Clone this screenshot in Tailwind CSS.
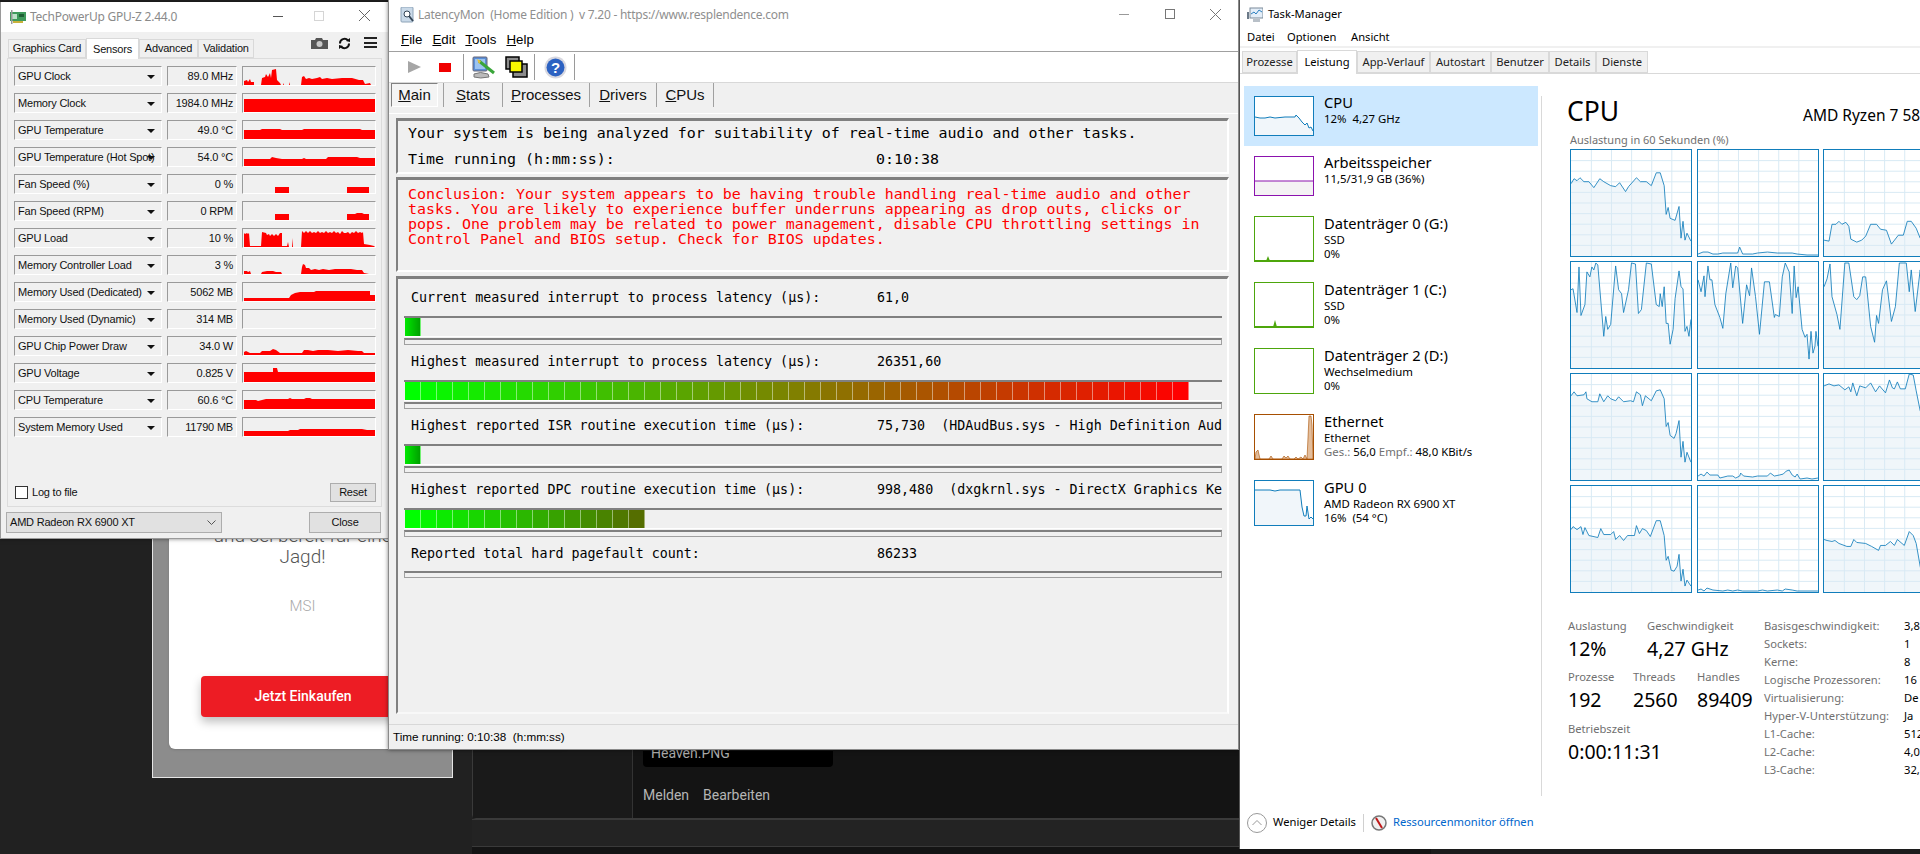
<!DOCTYPE html>
<html lang="en">
<head>
<meta charset="UTF-8">
<title>GPU-Z, LatencyMon, Task-Manager</title>
<script src="https://cdn.jsdelivr.net/npm/@tailwindcss/browser@4"></script>
</head>
<body class="bg-[#212121] h-[854px] w-[1920px] overflow-hidden relative">

<!-- forum page behind the windows -->
<div class="absolute left-[472px] top-[600px] w-[1448px] h-[219px] bg-[#141414] border border-[#3a3a3a] rounded-b flex">
  <div class="w-[160px] h-full border-r border-[#333] bg-[#1a1a1a]"></div>
  <div class="pl-[10px] pt-[150px] text-[#b5b5b5] font-['Roboto',sans-serif] text-[14px]">
    <div class="w-[190px] h-[16px] bg-black rounded-b text-[#aaa] px-2 leading-[4px]">Heaven.PNG</div>
    <div class="flex gap-[14px] mt-[18px]"><span>Melden</span><span>Bearbeiten</span></div>
  </div>
</div>
<div class="absolute left-[472px] top-[819px] w-[1448px] h-[27px] bg-[#232323] border-t border-[#3a3a3a]"></div>
<div class="absolute left-[472px] top-[846px] w-[1448px] h-[8px] bg-[#141414] border-t border-[#3a3a3a] flex"><div class="w-[959px]"></div><div class="flex-1 bg-[#1c1c1c]"></div></div>

<!-- MSI ad -->
<div class="absolute left-[152px] top-[480px] w-[301px] h-[298px] bg-[#8c8c8c] border-b border-x border-[#e5e5e5] pl-[16px] font-['Roboto',sans-serif]">
  <div class="w-[400px] h-[269px] bg-white rounded-b-md shadow flex flex-col">
    <div class="w-[267px] text-center font-light text-[#555] text-[19px] leading-[24px] pt-[44px]">und sei bereit für eine</div>
    <div class="w-[267px] text-center font-light text-[#555] text-[19px] leading-[24px] mt-[-3px]">Jagd!</div>
    <div class="w-[267px] text-center font-light text-[#a9a9a9] text-[15px] mt-[26px]">MSI</div>
    <div class="ml-[32px] mt-[58px] w-[204px] h-[41px] bg-[#ed1c24] rounded flex items-center justify-center text-white text-[14px] font-medium shadow-[0_5px_10px_rgba(0,0,0,0.25)]">Jetzt Einkaufen</div>
  </div>
</div>

<!-- GPU-Z -->
<div class="absolute left-0 top-[2px] w-[389px] h-[537px] bg-[#f0f0f0] shadow-[0_0_4px_rgba(0,0,0,0.5)] border-x border-b border-[#9a9a9a] font-['Liberation_Sans',sans-serif] text-[11px] tracking-[-0.2px] text-[#111]">
  <div class="h-[30px] bg-white flex items-center relative">
    <svg class="ml-[9px] w-[16px] h-[14px]" viewBox="0 0 16 14"><rect x="0" y="2" width="16" height="9" fill="#3f9a5b"/><rect x="2" y="4" width="5" height="5" fill="#bde0c8"/><rect x="9" y="4" width="5" height="3" fill="#1f5f35"/><rect x="1" y="0" width="1.5" height="14" fill="#9a9a9a"/><rect x="3" y="11" width="10" height="2" fill="#c9b23c"/></svg>
    <span class="ml-[4px] text-[12px] tracking-[-0.25px] text-[#8a8a8a] font-['Noto_Sans',sans-serif]">TechPowerUp GPU-Z 2.44.0</span>
    <svg class="absolute left-[272px] top-[14px] w-[10px] h-[2px]" viewBox="0 0 10 2"><rect width="10" height="1" fill="#555"/></svg>
    <div class="absolute left-[313px] top-[9px] w-[10px] h-[10px] border border-[#d5d5d5]"></div>
    <svg class="absolute left-[358px] top-[8px] w-[11px] h-[11px]" viewBox="0 0 11 11"><path d="M0 0L11 11M11 0L0 11" stroke="#666" stroke-width="1"/></svg>
  </div>
  <!-- tabs -->
  <div class="h-[26px] flex items-end pl-[7px] relative whitespace-nowrap">
    <div class="h-[19px] w-[78px] border border-[#d9d9d9] flex items-center justify-center">Graphics Card</div>
    <div class="h-[21px] w-[53px] bg-white border-x border-t border-[#d9d9d9] flex items-center justify-center z-10 -mb-px">Sensors</div>
    <div class="h-[19px] w-[59px] border border-[#d9d9d9] flex items-center justify-center">Advanced</div>
    <div class="h-[19px] w-[56px] border border-[#d9d9d9] flex items-center justify-center">Validation</div>
    <svg class="absolute left-[310px] top-[6px] w-[17px] h-[11px]" viewBox="0 0 17 11"><path d="M0 2H4L5 0H11L12 2H17V11H0Z" fill="#555"/><circle cx="8.5" cy="6" r="3" fill="#c8c8c8"/></svg>
    <svg class="absolute left-[337px] top-[5px] w-[13px] h-[13px]" viewBox="0 0 13 13"><path d="M2 6.5A4.5 4.5 0 0 1 10 3.5M11 6.5A4.5 4.5 0 0 1 3 9.5" fill="none" stroke="#111" stroke-width="2"/><path d="M8 4L12 5V1ZM5 9L1 8V12Z" fill="#111"/></svg>
    <div class="absolute left-[363px] top-[5px] w-[13px] h-[11px] flex flex-col justify-between"><div class="h-[2px] bg-[#222]"></div><div class="h-[2px] bg-[#222]"></div><div class="h-[2px] bg-[#222]"></div></div>
  </div>
  <!-- sensors panel -->
  <div class="mx-[6px] h-[449px] bg-[#f0f0f0] border border-[#dcdcdc] pl-[6px] pt-[7px] relative">
    <div class="flex flex-col gap-[7px]">
      <div class="flex gap-[5px] h-[20px]">
        <div class="w-[148px] border border-t-[#9a9a9a] border-l-[#9a9a9a] border-r-white border-b-white flex items-center pl-[3px] relative whitespace-nowrap overflow-hidden">GPU Clock<span class="absolute right-[6px] top-[8px] border-x-[4px] border-t-[4px] border-x-transparent border-t-[#111]"></span></div>
        <div class="w-[70px] border border-t-[#9a9a9a] border-l-[#9a9a9a] border-r-white border-b-white flex items-center justify-end pr-[3px]">89.0 MHz</div>
        <svg class="w-[134px] border border-t-[#9a9a9a] border-l-[#9a9a9a] border-r-white border-b-white" viewBox="0 0 132 18"><polygon fill="#ff0000" points="1,18 1,14 4,13 5,15 7,12 8,15 11,15 11,18 18,18 19,11 22,10 23,7 25,10 27,6 28,11 29,3 33,2 34,13 37,16 38,18 40,18 40,16 41,18 46,18 46,15 47,18 58,18 59,10 61,9 63,12 66,11 69,12 74,11 77,10 79,12 84,11 89,12 99,11 109,11 116,13 120,13 122,17 127,16 128,18"/></svg>
      </div>
      <div class="flex gap-[5px] h-[20px]">
        <div class="w-[148px] border border-t-[#9a9a9a] border-l-[#9a9a9a] border-r-white border-b-white flex items-center pl-[3px] relative whitespace-nowrap overflow-hidden">Memory Clock<span class="absolute right-[6px] top-[8px] border-x-[4px] border-t-[4px] border-x-transparent border-t-[#111]"></span></div>
        <div class="w-[70px] border border-t-[#9a9a9a] border-l-[#9a9a9a] border-r-white border-b-white flex items-center justify-end pr-[3px]">1984.0 MHz</div>
        <svg class="w-[134px] border border-t-[#9a9a9a] border-l-[#9a9a9a] border-r-white border-b-white" viewBox="0 0 132 18"><polygon fill="#ff0000" points="1,18 1,5 132,5 132,18"/></svg>
      </div>
      <div class="flex gap-[5px] h-[20px]">
        <div class="w-[148px] border border-t-[#9a9a9a] border-l-[#9a9a9a] border-r-white border-b-white flex items-center pl-[3px] relative whitespace-nowrap overflow-hidden">GPU Temperature<span class="absolute right-[6px] top-[8px] border-x-[4px] border-t-[4px] border-x-transparent border-t-[#111]"></span></div>
        <div class="w-[70px] border border-t-[#9a9a9a] border-l-[#9a9a9a] border-r-white border-b-white flex items-center justify-end pr-[3px]">49.0 °C</div>
        <svg class="w-[134px] border border-t-[#9a9a9a] border-l-[#9a9a9a] border-r-white border-b-white" viewBox="0 0 132 18"><polygon fill="#ff0000" points="1,18 1,9 17,9 19,8 37,8 39,9 59,9 61,8 117,8 119,9 132,9 132,18"/></svg>
      </div>
      <div class="flex gap-[5px] h-[20px]">
        <div class="w-[148px] border border-t-[#9a9a9a] border-l-[#9a9a9a] border-r-white border-b-white flex items-center pl-[3px] relative whitespace-nowrap overflow-hidden">GPU Temperature (Hot Spot)<span class="absolute right-[6px] top-[8px] border-x-[4px] border-t-[4px] border-x-transparent border-t-[#111]"></span></div>
        <div class="w-[70px] border border-t-[#9a9a9a] border-l-[#9a9a9a] border-r-white border-b-white flex items-center justify-end pr-[3px]">54.0 °C</div>
        <svg class="w-[134px] border border-t-[#9a9a9a] border-l-[#9a9a9a] border-r-white border-b-white" viewBox="0 0 132 18"><polygon fill="#ff0000" points="1,18 1,11 27,11 29,9 33,10 39,11 59,11 61,10 63,11 83,11 85,9 114,9 117,10 132,10 132,18"/></svg>
      </div>
      <div class="flex gap-[5px] h-[20px]">
        <div class="w-[148px] border border-t-[#9a9a9a] border-l-[#9a9a9a] border-r-white border-b-white flex items-center pl-[3px] relative whitespace-nowrap overflow-hidden">Fan Speed (%)<span class="absolute right-[6px] top-[8px] border-x-[4px] border-t-[4px] border-x-transparent border-t-[#111]"></span></div>
        <div class="w-[70px] border border-t-[#9a9a9a] border-l-[#9a9a9a] border-r-white border-b-white flex items-center justify-end pr-[3px]">0 %</div>
        <svg class="w-[134px] border border-t-[#9a9a9a] border-l-[#9a9a9a] border-r-white border-b-white" viewBox="0 0 132 18"><polygon fill="#ff0000" points="32,18 32,12 46,12 46,18"/><polygon fill="#ff0000" points="104,18 104,12 126,12 126,18"/></svg>
      </div>
      <div class="flex gap-[5px] h-[20px]">
        <div class="w-[148px] border border-t-[#9a9a9a] border-l-[#9a9a9a] border-r-white border-b-white flex items-center pl-[3px] relative whitespace-nowrap overflow-hidden">Fan Speed (RPM)<span class="absolute right-[6px] top-[8px] border-x-[4px] border-t-[4px] border-x-transparent border-t-[#111]"></span></div>
        <div class="w-[70px] border border-t-[#9a9a9a] border-l-[#9a9a9a] border-r-white border-b-white flex items-center justify-end pr-[3px]">0 RPM</div>
        <svg class="w-[134px] border border-t-[#9a9a9a] border-l-[#9a9a9a] border-r-white border-b-white" viewBox="0 0 132 18"><polygon fill="#ff0000" points="32,18 32,12 46,12 46,18"/><polygon fill="#ff0000" points="104,18 104,12 112,12 114,11 119,11 121,12 126,12 126,18"/></svg>
      </div>
      <div class="flex gap-[5px] h-[20px]">
        <div class="w-[148px] border border-t-[#9a9a9a] border-l-[#9a9a9a] border-r-white border-b-white flex items-center pl-[3px] relative whitespace-nowrap overflow-hidden">GPU Load<span class="absolute right-[6px] top-[8px] border-x-[4px] border-t-[4px] border-x-transparent border-t-[#111]"></span></div>
        <div class="w-[70px] border border-t-[#9a9a9a] border-l-[#9a9a9a] border-r-white border-b-white flex items-center justify-end pr-[3px]">10 %</div>
        <svg class="w-[134px] border border-t-[#9a9a9a] border-l-[#9a9a9a] border-r-white border-b-white" viewBox="0 0 132 18"><polygon fill="#ff0000" points="1,18 1,4 2,5 4,4 5,5 6,4 7,17 18,17 19,3 23,4 24,6 26,5 27,7 29,5 31,7 33,5 35,7 37,4 39,4 39,17 44,17 45,13 46,18 49,18 49,9 50,18 58,18 59,2 61,4 63,2 65,4 67,2 69,4 71,3 73,4 75,2 77,4 79,3 81,4 83,2 85,4 87,3 89,4 91,2 93,4 95,3 97,5 99,2 101,4 103,4 105,3 107,5 109,3 111,4 113,2 115,4 117,3 119,4 120,3 121,15 127,16 131,17 132,18"/></svg>
      </div>
      <div class="flex gap-[5px] h-[20px]">
        <div class="w-[148px] border border-t-[#9a9a9a] border-l-[#9a9a9a] border-r-white border-b-white flex items-center pl-[3px] relative whitespace-nowrap overflow-hidden">Memory Controller Load<span class="absolute right-[6px] top-[8px] border-x-[4px] border-t-[4px] border-x-transparent border-t-[#111]"></span></div>
        <div class="w-[70px] border border-t-[#9a9a9a] border-l-[#9a9a9a] border-r-white border-b-white flex items-center justify-end pr-[3px]">3 %</div>
        <svg class="w-[134px] border border-t-[#9a9a9a] border-l-[#9a9a9a] border-r-white border-b-white" viewBox="0 0 132 18"><polygon fill="#ff0000" points="1,18 1,15 4,15 5,16 7,15 8,18 18,18 19,16 24,15 30,15 33,16 38,16 39,18 58,18 59,11 60,8 62,9 63,12 66,12 68,14 72,13 76,14 80,13 86,14 92,13 100,13 108,13 114,14 119,14 121,17 126,18"/></svg>
      </div>
      <div class="flex gap-[5px] h-[20px]">
        <div class="w-[148px] border border-t-[#9a9a9a] border-l-[#9a9a9a] border-r-white border-b-white flex items-center pl-[3px] relative whitespace-nowrap overflow-hidden">Memory Used (Dedicated)<span class="absolute right-[6px] top-[8px] border-x-[4px] border-t-[4px] border-x-transparent border-t-[#111]"></span></div>
        <div class="w-[70px] border border-t-[#9a9a9a] border-l-[#9a9a9a] border-r-white border-b-white flex items-center justify-end pr-[3px]">5062 MB</div>
        <svg class="w-[134px] border border-t-[#9a9a9a] border-l-[#9a9a9a] border-r-white border-b-white" viewBox="0 0 132 18"><polygon fill="#ff0000" points="1,18 1,15 46,15 48,12 52,10 57,9 71,9 73,8 127,8 127,12 132,12 132,18"/></svg>
      </div>
      <div class="flex gap-[5px] h-[20px]">
        <div class="w-[148px] border border-t-[#9a9a9a] border-l-[#9a9a9a] border-r-white border-b-white flex items-center pl-[3px] relative whitespace-nowrap overflow-hidden">Memory Used (Dynamic)<span class="absolute right-[6px] top-[8px] border-x-[4px] border-t-[4px] border-x-transparent border-t-[#111]"></span></div>
        <div class="w-[70px] border border-t-[#9a9a9a] border-l-[#9a9a9a] border-r-white border-b-white flex items-center justify-end pr-[3px]">314 MB</div>
        <svg class="w-[134px] border border-t-[#9a9a9a] border-l-[#9a9a9a] border-r-white border-b-white" viewBox="0 0 132 18"></svg>
      </div>
      <div class="flex gap-[5px] h-[20px]">
        <div class="w-[148px] border border-t-[#9a9a9a] border-l-[#9a9a9a] border-r-white border-b-white flex items-center pl-[3px] relative whitespace-nowrap overflow-hidden">GPU Chip Power Draw<span class="absolute right-[6px] top-[8px] border-x-[4px] border-t-[4px] border-x-transparent border-t-[#111]"></span></div>
        <div class="w-[70px] border border-t-[#9a9a9a] border-l-[#9a9a9a] border-r-white border-b-white flex items-center justify-end pr-[3px]">34.0 W</div>
        <svg class="w-[134px] border border-t-[#9a9a9a] border-l-[#9a9a9a] border-r-white border-b-white" viewBox="0 0 132 18"><polygon fill="#ff0000" points="1,18 1,15 3,14 7,16 17,16 19,14 27,14 30,12 33,13 37,16 59,16 61,13 65,13 70,14 75,13 85,13 95,14 105,13 115,14 119,14 121,16 132,16 132,18"/></svg>
      </div>
      <div class="flex gap-[5px] h-[20px]">
        <div class="w-[148px] border border-t-[#9a9a9a] border-l-[#9a9a9a] border-r-white border-b-white flex items-center pl-[3px] relative whitespace-nowrap overflow-hidden">GPU Voltage<span class="absolute right-[6px] top-[8px] border-x-[4px] border-t-[4px] border-x-transparent border-t-[#111]"></span></div>
        <div class="w-[70px] border border-t-[#9a9a9a] border-l-[#9a9a9a] border-r-white border-b-white flex items-center justify-end pr-[3px]">0.825 V</div>
        <svg class="w-[134px] border border-t-[#9a9a9a] border-l-[#9a9a9a] border-r-white border-b-white" viewBox="0 0 132 18"><polygon fill="#ff0000" points="1,18 1,8 30,8 30,4 34,4 35,8 132,8 132,18"/></svg>
      </div>
      <div class="flex gap-[5px] h-[20px]">
        <div class="w-[148px] border border-t-[#9a9a9a] border-l-[#9a9a9a] border-r-white border-b-white flex items-center pl-[3px] relative whitespace-nowrap overflow-hidden">CPU Temperature<span class="absolute right-[6px] top-[8px] border-x-[4px] border-t-[4px] border-x-transparent border-t-[#111]"></span></div>
        <div class="w-[70px] border border-t-[#9a9a9a] border-l-[#9a9a9a] border-r-white border-b-white flex items-center justify-end pr-[3px]">60.6 °C</div>
        <svg class="w-[134px] border border-t-[#9a9a9a] border-l-[#9a9a9a] border-r-white border-b-white" viewBox="0 0 132 18"><polygon fill="#ff0000" points="1,18 1,9 13,9 15,10 19,9 23,8 45,8 47,7 49,8 61,8 63,7 67,7 69,8 132,8 132,18"/></svg>
      </div>
      <div class="flex gap-[5px] h-[20px]">
        <div class="w-[148px] border border-t-[#9a9a9a] border-l-[#9a9a9a] border-r-white border-b-white flex items-center pl-[3px] relative whitespace-nowrap overflow-hidden">System Memory Used<span class="absolute right-[6px] top-[8px] border-x-[4px] border-t-[4px] border-x-transparent border-t-[#111]"></span></div>
        <div class="w-[70px] border border-t-[#9a9a9a] border-l-[#9a9a9a] border-r-white border-b-white flex items-center justify-end pr-[3px]">11790 MB</div>
        <svg class="w-[134px] border border-t-[#9a9a9a] border-l-[#9a9a9a] border-r-white border-b-white" viewBox="0 0 132 18"><polygon fill="#ff0000" points="1,18 1,13 45,13 47,12 55,12 57,11 119,11 124,12 132,12 132,18"/></svg>
      </div>
    </div>
    <div class="flex items-center justify-between mt-[46px] pr-[5px]">
      <label class="flex items-center gap-[4px] ml-[1px]"><span class="w-[13px] h-[13px] bg-white border border-[#333]"></span>Log to file</label>
      <div class="w-[46px] h-[19px] bg-[#e1e1e1] border border-[#adadad] flex items-center justify-center">Reset</div>
    </div>
  </div>
  <div class="flex justify-between pl-[5px] pr-[7px] mt-[5px]">
    <div class="w-[216px] h-[21px] bg-[#e1e1e1] border border-[#adadad] flex items-center justify-between pl-[3px] pr-[5px]">AMD Radeon RX 6900 XT<svg class="w-[9px] h-[6px]" viewBox="0 0 9 6"><path d="M0.5 0.5L4.5 4.5L8.5 0.5" fill="none" stroke="#555"/></svg></div>
    <div class="w-[72px] h-[21px] bg-[#e1e1e1] border border-[#adadad] flex items-center justify-center">Close</div>
  </div>
</div>

<!-- LatencyMon -->
<div class="absolute left-[388px] top-0 w-[851px] h-[750px] bg-[#f0f0f0] border-x border-b border-[#8a8a8a] shadow-[0_0_4px_rgba(0,0,0,0.5)] flex flex-col font-['Liberation_Sans',sans-serif]">
  <div class="h-[29px] bg-white flex items-center relative shrink-0">
    <svg class="ml-[11px] w-[15px] h-[16px]" viewBox="0 0 15 16"><rect x="1" y="0" width="12" height="15" rx="1" fill="#c9d9e8" stroke="#8da3b8"/><circle cx="7" cy="7" r="3" fill="#fff" stroke="#345"/><path d="M9 9L13 14" stroke="#345" stroke-width="2"/></svg>
    <span class="ml-[3px] text-[12px] tracking-[-0.25px] text-[#8f8f8f] font-['Noto_Sans',sans-serif] whitespace-pre">LatencyMon  (Home Edition )  v 7.20 - https://www.resplendence.com</span>
    <div class="absolute left-[730px] top-[14px] w-[10px] h-px bg-[#999]"></div>
    <div class="absolute left-[776px] top-[9px] w-[10px] h-[10px] border border-[#777]"></div>
    <svg class="absolute left-[821px] top-[9px] w-[11px] h-[11px]" viewBox="0 0 11 11"><path d="M0 0L11 11M11 0L0 11" stroke="#777" stroke-width="1"/></svg>
  </div>
  <div class="h-[23px] bg-white border-b border-[#a0a0a0] flex items-center gap-[10px] pl-[12px] text-[13.3px] text-black shrink-0">
    <span><u>F</u>ile</span><span><u>E</u>dit</span><span><u>T</u>ools</span><span><u>H</u>elp</span>
  </div>
  <div class="h-[31px] bg-white border-b border-[#d8d8d8] flex items-center shrink-0">
    <svg class="ml-[19px] w-[13px] h-[12px]" viewBox="0 0 13 12"><polygon points="0,0 13,6 0,12" fill="#a6a6a6"/></svg>
    <div class="ml-[18px] w-[12px] h-[9px] bg-[#f00000]"></div>
    <div class="ml-[12px] w-px h-[26px] bg-[#9a9a9a]"></div>
    <svg class="ml-[8px] w-[24px] h-[23px]" viewBox="0 0 24 23"><rect x="1" y="1" width="14" height="14" rx="1" fill="#5a8fd8" stroke="#667"/><rect x="3" y="3" width="10" height="10" fill="#9cc3f0"/><path d="M2 18Q8 15 16 18L17 21Q8 23 2 21Z" fill="#bbb" stroke="#777"/><path d="M7 5L22 17" stroke="#3aa63a" stroke-width="3"/><path d="M5 3L9 5L7 8Z" fill="#e8c13a"/></svg>
    <svg class="ml-[9px] w-[23px] h-[22px]" viewBox="0 0 23 22"><rect x="8" y="8" width="14" height="13" fill="#8c8c8c" stroke="#000" stroke-width="1.5"/><rect x="1" y="1" width="13" height="12" fill="#8c8c8c" stroke="#000" stroke-width="1.5"/><rect x="5" y="5" width="12" height="11" fill="#f7f700" stroke="#000" stroke-width="1.5"/></svg>
    <div class="ml-[6px] w-px h-[26px] bg-[#9a9a9a]"></div>
    <svg class="ml-[9px] w-[23px] h-[23px]" viewBox="0 0 23 23"><circle cx="11.5" cy="11.5" r="11" fill="#d8d8e0"/><circle cx="11.5" cy="11.5" r="9" fill="#2c62c2"/><text x="11.5" y="17" text-anchor="middle" font-family="Liberation Sans" font-weight="700" font-size="15" fill="#fff">?</text></svg>
    <div class="ml-[7px] w-px h-[26px] bg-[#9a9a9a]"></div>
  </div>
  <div class="h-[30px] flex items-start pl-[2px] text-[15px] text-[#111] shrink-0">
    <div class="w-[47px] h-[24px] bg-[#f4f4f4] border border-t-[#808080] border-l-[#808080] border-r-white border-b-white flex items-center justify-center"><span><u>M</u>ain</span></div>
    <div class="ml-[5px] w-[59px] h-[24px] border-l border-[#a0a0a0] flex items-center justify-center"><span><u>S</u>tats</span></div>
    <div class="w-[87px] h-[24px] border-l border-[#a0a0a0] flex items-center justify-center"><span><u>P</u>rocesses</span></div>
    <div class="w-[67px] h-[24px] border-l border-[#a0a0a0] flex items-center justify-center"><span><u>D</u>rivers</span></div>
    <div class="w-[58px] h-[24px] border-x border-[#a0a0a0] flex items-center justify-center"><span><u>C</u>PUs</span></div>
  </div>
  <!-- panels -->
  <div class="flex-1 border-t border-white pt-[4px] pl-[7px] pr-[9px] flex flex-col gap-[3px] font-['DejaVu_Sans_Mono',monospace]">
    <div class="h-[56px] border-[2px] border-t-[3px] border-t-[#808080] border-l-[#808080] border-r-white border-b-white text-[14.95px] text-black pl-[10px] leading-[26px]">
      <div class="whitespace-pre -mt-px">Your system is being analyzed for suitability of real-time audio and other tasks.</div>
      <div class="flex"><span class="w-[468px]">Time running (h:mm:ss):</span><span>0:10:38</span></div>
    </div>
    <div class="h-[95px] border-[2px] border-t-[3px] border-t-[#808080] border-l-[#808080] border-r-white border-b-white text-[14.95px] text-[#ff0000] pl-[10px] pt-[7px] leading-[15px]">
      <div>Conclusion: Your system appears to be having trouble handling real-time audio and other</div>
      <div>tasks. You are likely to experience buffer underruns appearing as drop outs, clicks or</div>
      <div>pops. One problem may be related to power management, disable CPU throttling settings in</div>
      <div>Control Panel and BIOS setup. Check for BIOS updates.</div>
    </div>
    <div class="flex-1 border-[2px] border-t-[3px] border-t-[#808080] border-l-[#808080] border-r-white border-b-[#f8f8f8] mt-[1px] pl-[6px] pr-[5px] text-[13.33px] text-black mb-[10px]">
      <div class="h-[37px] pl-[7px] pt-[9px] flex whitespace-nowrap overflow-hidden"><span class="w-[466px] shrink-0">Current measured interrupt to process latency (µs):</span><span>61,0</span></div>
      <div class="h-[21px] border-t-[2px] border-t-[#808080] border-b-[1px] border-b-white flex pl-[1px]" data-cells="1" data-scale="2"></div>
      <div class="h-[7px] mt-[1px] border border-t-[2px] border-[#a0a0a0] border-t-[#808080]"></div>
      <div class="h-[35px] pl-[7px] pt-[7px] flex whitespace-nowrap overflow-hidden"><span class="w-[466px] shrink-0">Highest measured interrupt to process latency (µs):</span><span>26351,60</span></div>
      <div class="h-[21px] border-t-[2px] border-t-[#808080] border-b-[1px] border-b-white flex pl-[1px]" data-cells="49" data-scale="1"></div>
      <div class="h-[7px] mt-[1px] border border-t-[2px] border-[#a0a0a0] border-t-[#808080]"></div>
      <div class="h-[35px] pl-[7px] pt-[7px] flex whitespace-nowrap overflow-hidden"><span class="w-[466px] shrink-0">Highest reported ISR routine execution time (µs):</span><span class="whitespace-pre">75,730  (HDAudBus.sys - High Definition Aud</span></div>
      <div class="h-[21px] border-t-[2px] border-t-[#808080] border-b-[1px] border-b-white flex pl-[1px]" data-cells="1" data-scale="2"></div>
      <div class="h-[7px] mt-[1px] border border-t-[2px] border-[#a0a0a0] border-t-[#808080]"></div>
      <div class="h-[35px] pl-[7px] pt-[7px] flex whitespace-nowrap overflow-hidden"><span class="w-[466px] shrink-0">Highest reported DPC routine execution time (µs):</span><span class="whitespace-pre">998,480  (dxgkrnl.sys - DirectX Graphics Ker</span></div>
      <div class="h-[21px] border-t-[2px] border-t-[#808080] border-b-[1px] border-b-white flex pl-[1px]" data-cells="15" data-scale="3"></div>
      <div class="h-[7px] mt-[1px] border border-t-[2px] border-[#a0a0a0] border-t-[#808080]"></div>
      <div class="h-[34px] pl-[7px] pt-[7px] flex whitespace-nowrap overflow-hidden"><span class="w-[466px] shrink-0">Reported total hard pagefault count:</span><span>86233</span></div>
      <div class="h-[7px] border border-t-[2px] border-[#a0a0a0] border-t-[#808080]"></div>
    </div>
  </div>
  <div class="h-[25px] border-t border-[#d8d8d8] flex items-center pl-[4px] text-[11.7px] text-black shrink-0 whitespace-pre">Time running: 0:10:38  (h:mm:ss)</div>
</div>

<!-- Task-Manager -->
<div class="absolute left-[1239px] top-0 w-[681px] h-[849px] bg-white border-l border-[#555] font-['Noto_Sans',sans-serif] text-black overflow-hidden">
  <div class="h-[29px] flex items-center pl-[7px] text-[11.2px]">
    <svg class="w-[16px] h-[16px]" viewBox="0 0 16 16"><rect x="3" y="1" width="13" height="10" fill="#e4eef8" stroke="#7a8a99"/><path d="M4 7L7 5L9 7L12 3L15 5" fill="none" stroke="#2a7fc0"/><rect x="0" y="5" width="2" height="7" fill="#6c7a88"/><path d="M6 12H13V15H6Z" fill="#b8c0c8"/></svg>
    <span class="ml-[5px]">Task-Manager</span>
  </div>
  <div class="h-[19px] flex items-center pl-[7px] text-[11.2px] border-b-[2px] border-[#f0f0f0]">
    <span class="w-[40px]">Datei</span><span class="w-[64px]">Optionen</span><span>Ansicht</span>
  </div>
  <div class="h-[26px] flex items-end pl-[2px] text-[11.2px] border-b border-[#d9d9d9]">
    <div class="w-[55px] h-[22px] bg-[#f0f0f0] border border-[#d9d9d9] flex items-center justify-center text-[#222]">Prozesse</div>
    <div class="w-[60px] h-[24px] bg-white border-x border-t border-[#d9d9d9] flex items-center justify-center -mb-px z-10">Leistung</div>
    <div class="w-[73px] h-[22px] bg-[#f0f0f0] border border-[#d9d9d9] flex items-center justify-center text-[#222]">App-Verlauf</div>
    <div class="w-[61px] h-[22px] bg-[#f0f0f0] border border-[#d9d9d9] flex items-center justify-center text-[#222]">Autostart</div>
    <div class="w-[58px] h-[22px] bg-[#f0f0f0] border border-[#d9d9d9] flex items-center justify-center text-[#222]">Benutzer</div>
    <div class="w-[47px] h-[22px] bg-[#f0f0f0] border border-[#d9d9d9] flex items-center justify-center text-[#222]">Details</div>
    <div class="w-[52px] h-[22px] bg-[#f0f0f0] border border-[#d9d9d9] flex items-center justify-center text-[#222]">Dienste</div>
  </div>
  <div class="flex h-[724px]">
    <!-- left list -->
    <div class="w-[301px] shrink-0 pt-[12px] pl-[4px] pr-[3px] flex flex-col">
      <div class="h-[60px] bg-[#cce8ff] flex items-start pt-[10px] pl-[10px]">
        <svg class="w-[60px] h-[40px] border border-[#117dbb] bg-white" viewBox="0 0 58 38"><polygon fill="#f1f6fa" points="0,20 5,21 10,21 15,20 20,21 30,20 40,20 41,18 44,21 47,25 50,28 52,26 54,31 56,30 58,34 58,38 0,38"/><polyline fill="none" stroke="#117dbb" points="0,20 5,21 10,21 15,20 20,21 30,20 40,20 41,18 44,21 47,25 50,28 52,26 54,31 56,30 58,34"/></svg>
        <div class="ml-[10px] -mt-[3px]"><div class="text-[14.7px] leading-[18px]">CPU</div><div class="text-[11.4px] leading-[15px] whitespace-pre">12%  4,27 GHz</div></div>
      </div>
      <div class="h-[60px] flex items-start pt-[10px] pl-[10px]">
        <svg class="w-[60px] h-[40px] border border-[#8b12ae] bg-white" viewBox="0 0 58 38"><rect x="0" y="24" width="58" height="14" fill="#f4f2f4"/><line x1="0" y1="24" x2="58" y2="24" stroke="#8b12ae"/></svg>
        <div class="ml-[10px] -mt-[3px]"><div class="text-[14.7px] leading-[18px]">Arbeitsspeicher</div><div class="text-[11.4px] leading-[15px]">11,5/31,9 GB (36%)</div></div>
      </div>
      <div class="h-[66px] flex items-start pt-[10px] pl-[10px]">
        <svg class="w-[60px] h-[46px] border border-[#4da60c] bg-white" viewBox="0 0 58 44"><polygon fill="#4da60c" points="11,44 13,39 15,44"/><rect y="43" x="0" width="58" height="1" fill="#4da60c"/></svg>
        <div class="ml-[10px] -mt-[2px]"><div class="text-[14.7px] leading-[18px]">Datenträger 0 (G:)</div><div class="text-[11.4px] leading-[15px]">SSD</div><div class="text-[11.4px] leading-[14px]">0%</div></div>
      </div>
      <div class="h-[66px] flex items-start pt-[10px] pl-[10px]">
        <svg class="w-[60px] h-[46px] border border-[#4da60c] bg-white" viewBox="0 0 58 44"><polygon fill="#4da60c" points="18,44 20,37 22,44"/><rect y="43" x="0" width="58" height="1" fill="#4da60c"/></svg>
        <div class="ml-[10px] -mt-[2px]"><div class="text-[14.7px] leading-[18px]">Datenträger 1 (C:)</div><div class="text-[11.4px] leading-[15px]">SSD</div><div class="text-[11.4px] leading-[14px]">0%</div></div>
      </div>
      <div class="h-[66px] flex items-start pt-[10px] pl-[10px]">
        <svg class="w-[60px] h-[46px] border border-[#4da60c] bg-white" viewBox="0 0 58 44"></svg>
        <div class="ml-[10px] -mt-[2px]"><div class="text-[14.7px] leading-[18px]">Datenträger 2 (D:)</div><div class="text-[11.4px] leading-[15px]">Wechselmedium</div><div class="text-[11.4px] leading-[14px]">0%</div></div>
      </div>
      <div class="h-[66px] flex items-start pt-[10px] pl-[10px]">
        <svg class="w-[60px] h-[46px] border border-[#a74f01] bg-white" viewBox="0 0 58 44"><polygon fill="#e3bd9b" stroke="#a74f01" stroke-width="0.6" points="0,44 1,37 3,35 5,44 14,44 16,41 18,44 27,44 29,41 31,43 33,41 35,44 39,44 41,42 43,44 46,42 48,44 50,40 52,44 54,1 56,1 57,10 58,44"/></svg>
        <div class="ml-[10px] -mt-[2px]"><div class="text-[14.7px] leading-[18px]">Ethernet</div><div class="text-[11.4px] leading-[15px]">Ethernet</div><div class="text-[11.4px] leading-[14px] whitespace-nowrap"><span class="text-[#707070]">Ges.:</span> 56,0 <span class="text-[#707070]">Empf.:</span> 48,0 KBit/s</div></div>
      </div>
      <div class="h-[66px] flex items-start pt-[10px] pl-[10px]">
        <svg class="w-[60px] h-[46px] border border-[#117dbb] bg-white" viewBox="0 0 58 44"><polygon fill="#f1f6fa" points="0,9 15,9 20,10 25,9 45,9 47,26 49,35 51,35 52,25 54,38 56,36 58,38 58,44 0,44"/><polyline fill="none" stroke="#117dbb" points="0,9 15,9 20,10 25,9 45,9 47,26 49,35 51,35 52,25 54,38 56,36 58,38"/></svg>
        <div class="ml-[10px] -mt-[2px]"><div class="text-[14.7px] leading-[18px]">GPU 0</div><div class="text-[11.4px] leading-[15px]">AMD Radeon RX 6900 XT</div><div class="text-[11.4px] leading-[14px] whitespace-pre">16%  (54 °C)</div></div>
      </div>
    </div>
    <!-- CPU detail -->
    <div class="flex-1 mt-[22px] h-[700px] border-l border-[#d9d9d9] pl-[25px] min-w-0 overflow-hidden">
      <div class="w-[377px] flex items-baseline h-[30px] whitespace-nowrap overflow-hidden">
        <span class="text-[26.5px] leading-[30px] w-[236px] shrink-0">CPU</span><span class="text-[15.5px]">AMD Ryzen 7 58</span>
      </div>
      <div class="text-[11px] text-[#707070] pl-[3px] mt-[5px] leading-[17px]">Auslastung in 60 Sekunden (%)</div>
      <div class="grid grid-cols-[122px_122px_97px] gap-x-[4.5px] gap-y-[4px] ml-[3px] mt-[1px]" id="cpuGraphs">
        <svg class="h-[108px] w-[122px] border border-[#117dbb]" viewBox="0 0 121 107" data-pts="0,34 3,29 6,31 9,28 13,32 18,32 23,38 29,29 33,32 40,36 45,37 49,33 55,42 58,37 66,28 70,32 76,32 81,36 86,23 90,23 94,36 96,65 98,58 100,69 105,71 109,57 111,89 113,72 115,91 117,84 121,92"></svg>
        <svg class="h-[108px] w-[122px] border border-[#117dbb]" viewBox="0 0 121 107" data-pts="0,105 5,103 10,103 15,105 20,105 25,104 40,104 42,98 45,105 55,105 60,104 70,103 80,104 95,104 100,105 110,106 121,106"></svg>
        <svg class="h-[108px] w-[122px] border border-[#117dbb]" viewBox="0 0 121 107" data-pts="0,91 5,92 8,75 12,75 15,72 18,75 22,73 25,77 27,90 33,93 38,91 42,87 47,75 53,75 57,80 63,81 68,95 75,86 80,86 84,72 88,72 93,79 97,89 105,88 121,92"></svg>
        <svg class="h-[108px] w-[122px] border border-[#117dbb]" viewBox="0 0 121 107" data-pts="0,28 2,27 6,51 8,5 10,54 14,43 16,10 19,15 21,5 23,8 25,1 27,3 33,75 35,55 37,68 40,63 45,4 48,28 51,32 53,51 58,28 61,1 65,2 68,52 71,48 76,1 81,2 86,43 89,45 90,32 92,45 94,25 96,62 98,62 100,83 103,68 105,37 109,9 111,25 113,27 115,70 117,65 119,75 121,58"></svg>
        <svg class="h-[108px] w-[122px] border border-[#117dbb]" viewBox="0 0 121 107" data-pts="0,18 3,30 6,14 7,35 10,4 12,18 14,18 17,43 22,56 25,67 28,32 33,1 35,26 38,4 40,6 45,62 49,23 52,34 54,6 58,35 62,73 67,20 72,20 77,56 78,53 82,55 85,15 88,1 92,10 95,52 97,4 99,36 101,25 105,68 108,76 110,73 112,98 114,70 116,92 118,85 119,70 121,85"></svg>
        <svg class="h-[108px] w-[122px] border border-[#117dbb]" viewBox="0 0 121 107" data-pts="0,25 3,17 6,2 8,35 13,53 16,68 21,1 25,1 30,35 33,38 36,34 39,15 42,15 47,65 51,81 53,54 55,62 59,28 63,19 68,60 72,45 76,1 83,1 86,30 88,8 92,50 97,8 102,40 110,60 121,50"></svg>
        <svg class="h-[108px] w-[122px] border border-[#117dbb]" viewBox="0 0 121 107" data-pts="0,22 3,18 6,22 13,21 15,18 16,25 21,28 27,28 29,20 33,28 37,22 40,25 45,27 48,23 53,28 60,27 63,28 66,18 70,21 72,32 75,22 81,27 86,17 90,16 94,25 96,53 98,49 100,62 104,65 106,60 109,47 111,84 113,68 115,89 117,79 121,89"></svg>
        <svg class="h-[108px] w-[122px] border border-[#117dbb]" viewBox="0 0 121 107" data-pts="0,103 3,101 6,103 9,99 12,102 20,102 22,105 30,103 35,103 38,105 42,103 43,100 46,103 55,104 60,103 70,103 73,100 77,103 82,102 86,101 89,98 92,97 95,102 98,104 100,101 103,106 110,105 115,106 121,105"></svg>
        <svg class="h-[108px] w-[122px] border border-[#117dbb]" viewBox="0 0 121 107" data-pts="0,12 5,10 10,12 15,11 21,16 25,13 27,18 29,9 33,22 36,12 42,14 47,9 52,18 56,12 62,19 66,6 69,14 71,15 74,8 77,15 82,15 86,0 90,1 93,17 97,37 100,45 106,65 121,85"></svg>
        <svg class="h-[108px] w-[122px] border border-[#117dbb]" viewBox="0 0 121 107" data-pts="0,44 2,41 6,44 10,41 12,49 14,42 18,50 27,52 30,43 33,49 40,49 43,46 45,54 49,50 53,55 57,50 64,50 66,40 69,48 72,43 76,45 80,51 86,35 90,35 94,50 96,75 98,71 101,85 104,86 107,81 109,69 111,96 113,84 115,101 117,95 121,101"></svg>
        <svg class="h-[108px] w-[122px] border border-[#117dbb]" viewBox="0 0 121 107" data-pts="0,105 3,104 6,106 9,103 15,105 25,106 30,105 35,106 40,105 45,106 60,106 65,105 70,106 80,105 85,106 88,104 95,105 100,106 110,106 121,106"></svg>
        <svg class="h-[108px] w-[122px] border border-[#117dbb]" viewBox="0 0 121 107" data-pts="0,54 3,55 8,56 11,55 15,58 23,61 27,61 30,54 33,57 42,58 48,61 55,65 57,60 62,60 67,56 71,60 74,54 81,60 86,46 90,50 93,58 97,81 100,95 110,100 121,100"></svg>
      </div>
      <!-- stats -->
      <div class="flex mt-[24px] w-[378px] ml-px">
        <div class="w-[196px] shrink-0">
          <div class="flex h-[18px] items-center text-[11.2px] text-[#707070]"><span class="w-[79px]">Auslastung</span><span>Geschwindigkeit</span></div>
          <div class="flex h-[28px] items-center text-[19.5px]"><span class="w-[79px]">12%</span><span>4,27 GHz</span></div>
          <div class="flex h-[20px] items-center text-[11.2px] text-[#707070] mt-[4px]"><span class="w-[65px]">Prozesse</span><span class="w-[64px]">Threads</span><span>Handles</span></div>
          <div class="flex h-[26px] items-center text-[19.5px]"><span class="w-[65px]">192</span><span class="w-[64px]">2560</span><span>89409</span></div>
          <div class="h-[20px] flex items-center text-[11.2px] text-[#707070] mt-[6px]">Betriebszeit</div>
          <div class="h-[28px] flex items-center text-[19.5px] -mt-px">0:00:11:31</div>
        </div>
        <div class="grid grid-cols-[140px_auto] justify-start auto-rows-[18px] items-center text-[11.2px]">
          <span class="text-[#707070]">Basisgeschwindigkeit:</span><span>3,8</span>
          <span class="text-[#707070]">Sockets:</span><span>1</span>
          <span class="text-[#707070]">Kerne:</span><span>8</span>
          <span class="text-[#707070]">Logische Prozessoren:</span><span>16</span>
          <span class="text-[#707070]">Virtualisierung:</span><span>De</span>
          <span class="text-[#707070]">Hyper-V-Unterstützung:</span><span>Ja</span>
          <span class="text-[#707070]">L1-Cache:</span><span>512</span>
          <span class="text-[#707070]">L2-Cache:</span><span>4,0</span>
          <span class="text-[#707070]">L3-Cache:</span><span>32,</span>
        </div>
      </div>
    </div>
  </div>
  <div class="h-[51px] -mt-[1px] flex items-center pl-[7px] text-[11.2px]">
    <svg class="w-[20px] h-[20px]" viewBox="0 0 20 20"><circle cx="10" cy="10" r="9.5" fill="none" stroke="#999"/><path d="M5.5 12L10 7.5L14.5 12" fill="none" stroke="#999"/></svg>
    <span class="ml-[6px]">Weniger Details</span>
    <div class="ml-[7px] w-px h-[18px] bg-[#d0d0d0]"></div>
    <svg class="ml-[7px] w-[16px] h-[18px]" viewBox="0 0 16 18"><circle cx="8" cy="9" r="7" fill="#f0f0f0" stroke="#777" stroke-width="1.5"/><path d="M5 4L11 14" stroke="#c01818" stroke-width="2"/></svg>
    <span class="ml-[6px] text-[#0066cc]">Ressourcenmonitor öffnen</span>
  </div>
</div>

<script>
// latency bars: colour of each cell comes from its position on the green to red scale
document.querySelectorAll('[data-cells]').forEach(function (bar) {
  var n = +bar.dataset.cells, scale = +bar.dataset.scale;
  for (var i = 0; i < n; i++) {
    var f = i / 48;
    var r = Math.round(255 * f), g = Math.round(255 * (1 - f));
    if (scale === 3) { r = Math.round(85 * i / 14); g = Math.round(255 - 145 * i / 14); }
    var c = document.createElement('div');
    c.style.width = '16px';
    c.style.height = '100%';
    c.style.flex = 'none';
    c.style.borderRight = '1px solid rgba(255,255,255,0.45)';
    c.style.background = scale === 2 ? 'linear-gradient(90deg,#00e800,#00a000)' : 'rgb(' + r + ',' + g + ',0)';
    bar.appendChild(c);
  }
});
// cpu core graphs
document.querySelectorAll('[data-pts]').forEach(function (svg) {
  var pts = svg.dataset.pts;
  var grid = '';
  for (var x = 20.5; x < 121; x += 20.3) grid += '<line x1="' + x + '" y1="0" x2="' + x + '" y2="107" stroke="#d9eaf4"/>';
  for (var y = 10.7; y < 107; y += 10.7) grid += '<line x1="0" y1="' + y + '" x2="121" y2="' + y + '" stroke="#d9eaf4"/>';
  svg.innerHTML = '<polygon fill="#e4eef6" fill-opacity="0.55" points="0,107 ' + pts + ' 121,107"/>' + grid +
    '<polyline fill="none" stroke="#117dbb" stroke-width="1" stroke-opacity="0.85" points="' + pts + '"/>';
});
</script>
</body>
</html>
